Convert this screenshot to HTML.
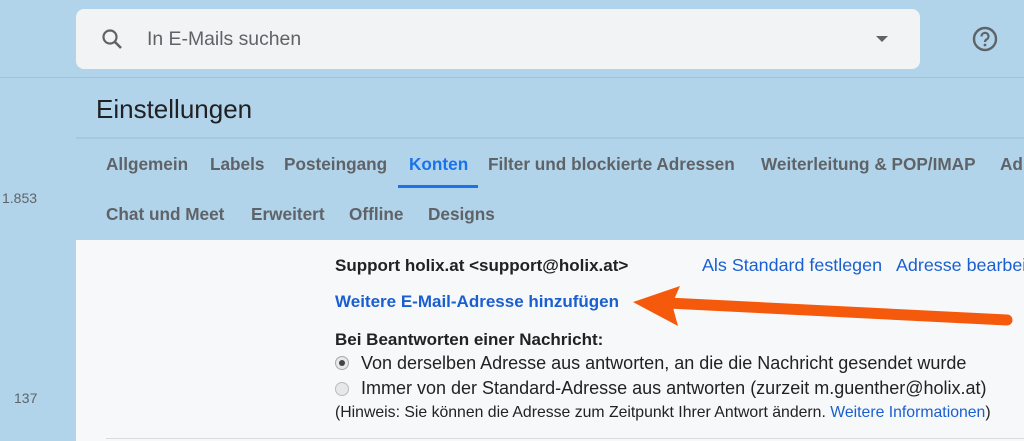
<!DOCTYPE html>
<html><head><meta charset="utf-8"><style>
body{margin:0;width:1024px;height:441px;overflow:hidden;background:#b1d4ea;font-family:"Liberation Sans",sans-serif;position:relative}
.a{position:absolute;white-space:nowrap}
.search{position:absolute;left:76px;top:9px;width:844px;height:60px;background:#f1f3f4;border-radius:8px}
.tab{position:absolute;top:154px;font-size:17.2px;color:#5f6368;font-weight:bold}
.tab2{top:204px}
.panel{position:absolute;left:76px;top:240px;width:948px;height:201px;background:#f6f8fa}
</style></head><body>
<div class="a" style="left:0;top:77px;width:1024px;height:1px;background:#a1c3d8"></div>
<div class="a" style="left:76px;top:137px;width:948px;height:2px;background:#a7c9de"></div>
<div class="search">
<svg style="position:absolute;left:24px;top:18px" width="24" height="24" viewBox="0 0 24 24"><circle cx="10" cy="10" r="6.5" fill="none" stroke="#5f6368" stroke-width="2.2"/><path d="M15 15l6 6" stroke="#5f6368" stroke-width="2.6"/></svg>
<div class="a" style="left:71px;top:19px;font-size:19.4px;color:#5f6368">In E-Mails suchen</div>
<svg style="position:absolute;left:799px;top:26px" width="14" height="8"><path d="M1 1h12L7 7z" fill="#5f6368"/></svg>
</div>
<svg class="a" style="left:971px;top:25px" width="28" height="28" viewBox="0 0 28 28"><circle cx="14" cy="14" r="11" fill="none" stroke="#5f6368" stroke-width="2.4"/><path d="M10.5 11.5a3.5 3.5 0 1 1 5 3c-1.2.7-1.5 1.3-1.5 2.5" fill="none" stroke="#5f6368" stroke-width="2.2"/><circle cx="14" cy="20" r="1.4" fill="#5f6368"/></svg>
<div class="a" style="left:96px;top:94px;font-size:26px;color:#202124">Einstellungen</div>
<div class="tab a" style="left:106px">Allgemein</div>
<div class="tab a" style="left:210px">Labels</div>
<div class="tab a" style="left:284px">Posteingang</div>
<div class="tab a" style="left:409px;color:#1a73e8">Konten</div>
<div class="a" style="left:398px;top:185px;width:80px;height:3px;background:#1a73e8"></div>
<div class="tab a" style="left:488px">Filter und blockierte Adressen</div>
<div class="tab a" style="left:761px">Weiterleitung &amp; POP/IMAP</div>
<div class="tab a" style="left:1000px">Ad</div>
<div class="tab tab2 a" style="left:106px">Chat und Meet</div>
<div class="tab tab2 a" style="left:251px">Erweitert</div>
<div class="tab tab2 a" style="left:349px">Offline</div>
<div class="tab tab2 a" style="left:428px">Designs</div>
<div class="a" style="left:2px;top:190px;font-size:14px;color:#5f6368">1.853</div>
<div class="a" style="left:14px;top:390px;font-size:14px;color:#5f6368">137</div>
<div class="panel"></div>
<div class="a" style="left:106px;top:438px;width:918px;height:1px;background:#dadce0"></div>
<div class="a" style="left:335px;top:256px;font-size:17px;font-weight:bold;color:#222">Support holix.at &lt;support@holix.at&gt;</div>
<div class="a" style="left:702px;top:255px;font-size:17.9px;color:#1a5fd0">Als Standard festlegen</div>
<div class="a" style="left:896px;top:255px;font-size:17.9px;color:#1a5fd0">Adresse bearbeiten</div>
<div class="a" style="left:335px;top:292px;font-size:17px;font-weight:bold;color:#1a5fd0">Weitere E-Mail-Adresse hinzufügen</div>
<div class="a" style="left:335px;top:330px;font-size:17px;font-weight:bold;color:#222">Bei Beantworten einer Nachricht:</div>
<div class="a" style="left:335px;top:356px;width:12px;height:12px;border-radius:50%;background:#e8e8e8;border:1px solid #aaa"></div>
<div class="a" style="left:339px;top:360px;width:6px;height:6px;border-radius:50%;background:#444"></div>
<div class="a" style="left:361px;top:353px;font-size:18px;color:#222">Von derselben Adresse aus antworten, an die die Nachricht gesendet wurde</div>
<div class="a" style="left:335px;top:382px;width:12px;height:12px;border-radius:50%;background:#e8e8e8;border:1px solid #bbb"></div>
<div class="a" style="left:361px;top:378px;font-size:18px;color:#222">Immer von der Standard-Adresse aus antworten (zurzeit m.guenther@holix.at)</div>
<div class="a" style="left:335px;top:404px;font-size:15.8px;color:#222">(Hinweis: Sie können die Adresse zum Zeitpunkt Ihrer Antwort ändern. <span style="color:#1a5fd0">Weitere Informationen</span>)</div>
<svg class="a" style="left:0;top:0" width="1024" height="441"><path d="M1007 320L668 303" stroke="#f55a0c" stroke-width="11" stroke-linecap="round"/><path d="M633 302L680 286L672 304L678 326z" fill="#f55a0c"/></svg>
</body></html>
